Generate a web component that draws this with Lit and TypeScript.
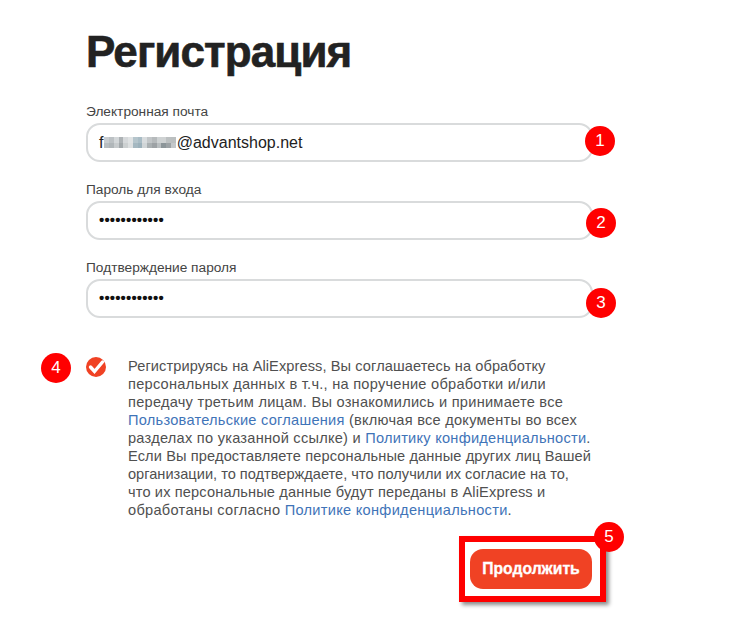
import { LitElement, html, css } from "lit";
import { customElement } from "lit/decorators.js";

const blurRows = [
  ["#c9cdd0", "#bcc1c4", "#d3d7d9", "#adb2b5", "#d6d9db", "#e0e3e4", "#b5c5cc", "#a9bcc5", "#d8dcde", "#c2c6c8", "#b6babc", "#ced2d3", "#cfd2d3", "#bcc0c1", "#bbbfc0"],
  ["#b8bdc0", "#b0b6b9", "#c7cbcd", "#a2a8ab", "#ccd0d1", "#dde0e1", "#a5b8c1", "#9cb1bb", "#d0d5d7", "#aab0b2", "#9da2a5", "#b9bec0", "#8c9599", "#9ca2a5", "#c4c8ca"],
];

const L = (t: string) => html`<a>${t}</a>`;

const lines: { ls: number; parts: unknown[] }[] = [
  { ls: 0.09, parts: ["Регистрируясь на AliExpress, Вы соглашаетесь на обработку"] },
  { ls: 0.25, parts: ["персональных данных в т.ч., на поручение обработки и/или"] },
  { ls: 0.25, parts: ["передачу третьим лицам. Вы ознакомились и принимаете все"] },
  { ls: 0.25, parts: [L("Пользовательские соглашения"), " (включая все документы во всех"] },
  { ls: 0.25, parts: ["разделах по указанной ссылке) и ", L("Политику конфиденциальности"), "."] },
  { ls: 0.12, parts: ["Если Вы предоставляете персональные данные других лиц Вашей"] },
  { ls: 0, parts: ["организации, то подтверждаете, что получили их согласие на то,"] },
  { ls: 0.14, parts: ["что их персональные данные будут переданы в AliExpress и"] },
  { ls: 0.29, parts: ["обработаны согласно ", L("Политике конфиденциальности"), "."] },
];

@customElement("app-root")
export class AppRoot extends LitElement {
  static styles = css`
    :host { display: block; width: 740px; height: 640px; background: #fff; position: relative; overflow: hidden; font-family: "Liberation Sans", Arial, sans-serif; color: #333; }
    .page { display: flex; flex-direction: column; padding: 26px 0 0 86px; }
    h1 { margin: 0 0 25px; font-size: 44px; line-height: 52px; font-weight: 700; color: #222; letter-spacing: -0.9px; -webkit-text-stroke: 0.6px #222; }
    .field { display: flex; flex-direction: column; width: 507px; margin-bottom: 19px; }
    label { font-size: 13.7px; line-height: 18px; color: #444; margin-bottom: 2px; }
    .input { box-sizing: border-box; height: 39px; border: 2px solid #d9dbdc; border-radius: 14px; display: flex; align-items: center; padding: 0 11px; font-size: 16px; color: #222; background: #fff; }
    .blur { display: inline-flex; flex-direction: column; margin: 0 1px 0 1px; filter: blur(0.6px); }
    .row { display: flex; }
    .row i { display: block; width: 4.75px; height: 5.5px; }
    .dots { font-size: 15px; letter-spacing: 0.15px; font-weight: 700; color: #111; position: relative; top: -1px; }
    .agree { display: flex; margin-top: 20px; width: 507px; }
    .check { flex: none; width: 20px; height: 20px; margin-right: 22px; }
    .text { font-size: 14.6px; line-height: 18px; color: #505050; }
    .line { white-space: nowrap; }
    a { color: #3f74b8; text-decoration: none; }
    .actions { display: flex; justify-content: flex-end; width: 506px; margin-top: 30px; }
    button { width: 122px; height: 40px; border: 0; border-radius: 13px; background: #f04224; color: #fff; font: 700 15.7px "Liberation Sans", Arial, sans-serif; -webkit-text-stroke: 0.3px #fff; padding: 0; }
    .frame { position: absolute; left: 459px; top: 536px; width: 135px; height: 54px; border: 6px solid #f00; box-shadow: 3px 3px 4px rgba(0,0,0,.45); pointer-events: none; }
    .badge { position: absolute; width: 30px; height: 30px; border-radius: 50%; background: #f00; color: #fff; font-size: 17px; line-height: 30px; text-align: center; }
    .b1 { left: 585px; top: 126px; }
    .b2 { left: 586px; top: 208px; }
    .b3 { left: 586px; top: 288px; }
    .b4 { left: 41px; top: 353px; }
    .b5 { left: 594px; top: 522px; }
  `;

  render() {
    return html`
      <div class="page">
        <h1>Регистрация</h1>
        <div class="field">
          <label>Электронная почта</label>
          <div class="input">f<span class="blur">${blurRows.map(
            (r) => html`<span class="row">${r.map((c) => html`<i style="background:${c}"></i>`)}</span>`
          )}</span>@advantshop.net</div>
        </div>
        <div class="field">
          <label>Пароль для входа</label>
          <div class="input"><span class="dots">••••••••••••</span></div>
        </div>
        <div class="field">
          <label>Подтверждение пароля</label>
          <div class="input"><span class="dots">••••••••••••</span></div>
        </div>
        <div class="agree">
          <svg class="check" viewBox="0 0 20 20">
            <circle cx="10" cy="10" r="10" fill="#f04224"></circle>
            <path d="M4.5 10l4 4.5L16.5 5" fill="none" stroke="#fff" stroke-width="3.4" stroke-linecap="round"></path>
          </svg>
          <div class="text">
            ${lines.map((l) => html`<div class="line" style="letter-spacing:${l.ls}px">${l.parts}</div>`)}
          </div>
        </div>
        <div class="actions"><button>Продолжить</button></div>
      </div>
      <div class="frame"></div>
      <div class="badge b1">1</div>
      <div class="badge b2">2</div>
      <div class="badge b3">3</div>
      <div class="badge b4">4</div>
      <div class="badge b5">5</div>
    `;
  }
}
